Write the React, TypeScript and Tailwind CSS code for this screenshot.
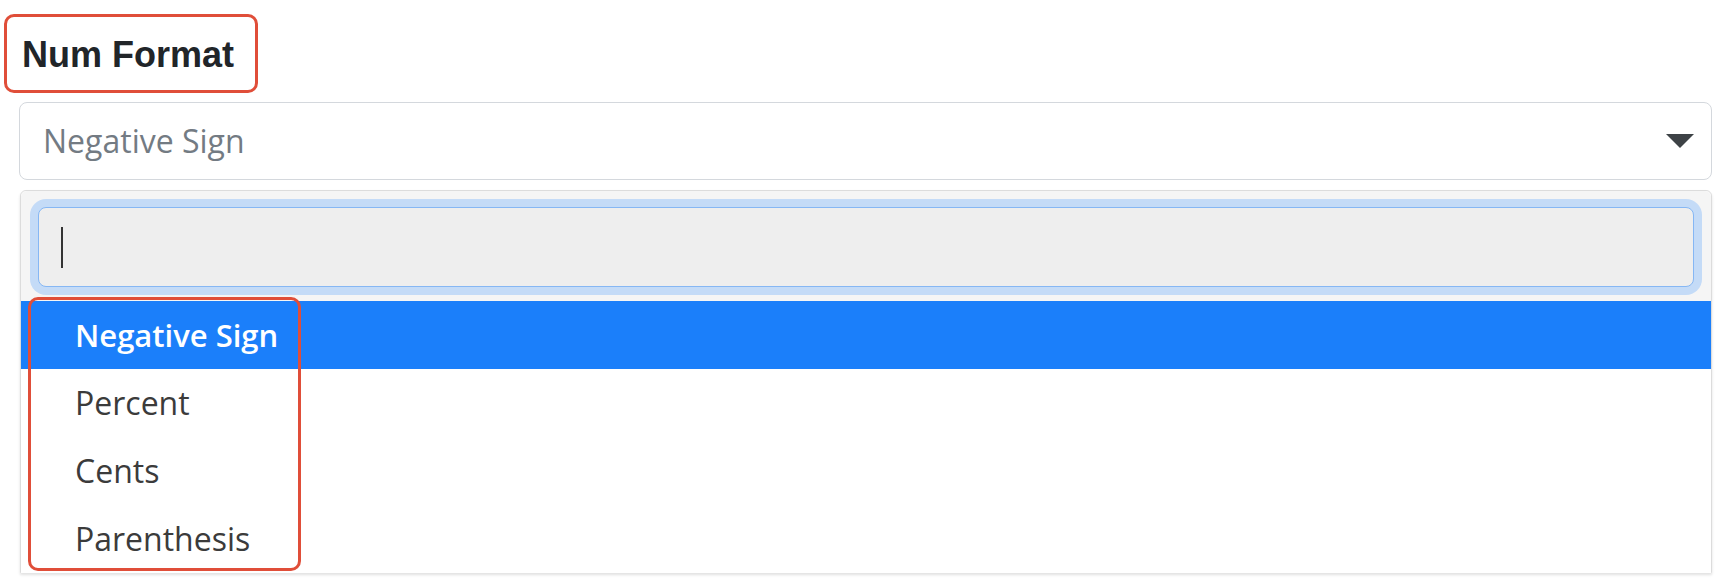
import React from "react";

const options = ["Negative Sign", "Percent", "Cents", "Parenthesis"];

export default function App() {
  return (
    <div className="relative w-[1729px] h-[583px] bg-white overflow-hidden">
      <div className="pt-[14px] pl-[4px]">
        <div className="flex h-[79px] w-[254px] items-center rounded-[10px] border-[3px] border-[#e04e39] pl-[15px] pt-[2px] text-[36px] font-bold text-[#212529] [font-family:'Liberation_Sans',Arial,sans-serif]">
          Num Format
        </div>
      </div>

      <div className="[font-family:'Open_Sans',sans-serif]">
        <div className="ml-[19px] mr-[17px] mt-[9px] flex h-[78px] items-center justify-between rounded-[8px] border border-[#d4d8dd] pl-[23px] pr-[17px]">
          <span className="text-[32px] text-[#737b83]">Negative Sign</span>
          <svg width="28" height="15" viewBox="0 0 28 15">
            <path d="M0 0 L28 0 L14 14 Z" fill="#3d4246" />
          </svg>
        </div>

        <div className="relative ml-[20px] mr-[17px] mt-[10px] h-[383px] rounded-t-[6px] border border-[#dcdcdc] bg-white shadow-[0_2px_3px_rgba(0,0,0,0.12)]">
          <div className="rounded-t-[6px] bg-[#f5f5f5] px-[17px] pt-[16px] pb-[14px]">
            <div className="flex h-[80px] items-center rounded-[8px] border border-[#86b7f4] bg-[#eeeeee] pl-[22px] shadow-[0_0_0_8px_#c4dbf7]">
              <div className="h-[41px] w-[2px] bg-[#333]" />
            </div>
          </div>
          <ul className="bg-white">
            {options.map((o, i) => (
              <li
                key={o}
                className={
                  i === 0
                    ? "flex h-[68px] items-center bg-[#1b7ffa] pl-[54px] text-[31px] font-semibold text-white"
                    : "flex h-[68px] items-center pl-[54px] text-[32px] text-[#3b3b3b]"
                }
              >
                {o}
              </li>
            ))}
          </ul>
          <div className="pointer-events-none absolute left-[7px] top-[106px] h-[274px] w-[273px] rounded-[10px] border-[3px] border-[#e04e39]" />
        </div>
      </div>
    </div>
  );
}
